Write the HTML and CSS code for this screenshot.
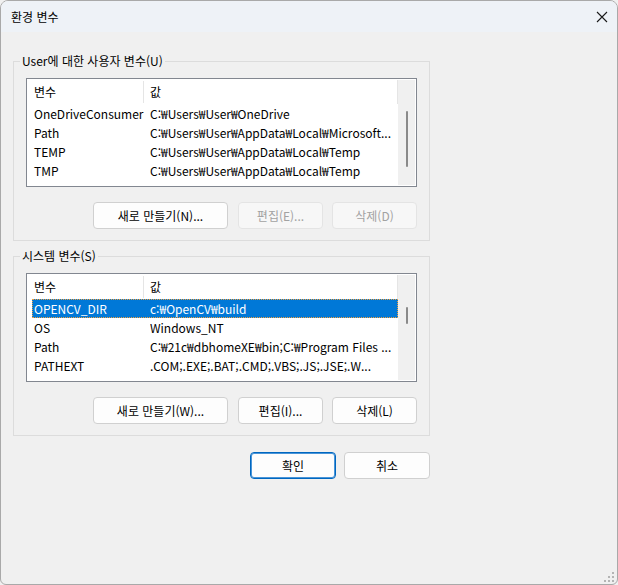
FILE: index.html
```html
<!DOCTYPE html>
<html lang="ko">
<head>
  <meta charset="UTF-8">
  <meta name="viewport" content="width=device-width, initial-scale=1.0">
  <title>환경 변수</title>
  <link rel="stylesheet" href="styles.css">
</head>
<body>
  <div class="window">
    <div class="titlebar">
      <span class="title">환경 변수</span>
      <svg class="close" width="12" height="12" viewBox="0 0 12 12">
        <path d="M1 1L11 11M11 1L1 11" stroke="#1a1a1a" stroke-width="1.1" fill="none"/>
      </svg>
    </div>

    <div class="content">
      <!-- 사용자 변수 -->
      <fieldset class="group">
        <legend>User에 대한 사용자 변수(U)</legend>
        <div class="list">
          <div class="list-body">
            <div class="head"><span class="col-name">변수</span><span class="col-value">값</span></div>
            <div class="row"><span class="name">OneDriveConsumer</span><span class="value">C:₩Users₩User₩OneDrive</span></div>
            <div class="row"><span class="name">Path</span><span class="value">C:₩Users₩User₩AppData₩Local₩Microsoft...</span></div>
            <div class="row"><span class="name">TEMP</span><span class="value">C:₩Users₩User₩AppData₩Local₩Temp</span></div>
            <div class="row"><span class="name">TMP</span><span class="value">C:₩Users₩User₩AppData₩Local₩Temp</span></div>
          </div>
          <div class="scrollbar"><div class="thumb thumb-user"></div></div>
        </div>
        <div class="buttons">
          <button class="btn btn-wide">새로 만들기(N)...</button>
          <button class="btn" disabled>편집(E)...</button>
          <button class="btn" disabled>삭제(D)</button>
        </div>
      </fieldset>

      <!-- 시스템 변수 -->
      <fieldset class="group group-system">
        <legend>시스템 변수(S)</legend>
        <div class="list">
          <div class="list-body">
            <div class="head"><span class="col-name">변수</span><span class="col-value">값</span></div>
            <div class="row selected"><span class="name">OPENCV_DIR</span><span class="value">c:₩OpenCV₩build</span></div>
            <div class="row"><span class="name">OS</span><span class="value">Windows_NT</span></div>
            <div class="row"><span class="name">Path</span><span class="value">C:₩21c₩dbhomeXE₩bin;C:₩Program Files ...</span></div>
            <div class="row"><span class="name">PATHEXT</span><span class="value">.COM;.EXE;.BAT;.CMD;.VBS;.JS;.JSE;.W...</span></div>
          </div>
          <div class="scrollbar"><div class="thumb thumb-system"></div></div>
        </div>
        <div class="buttons">
          <button class="btn btn-wide">새로 만들기(W)...</button>
          <button class="btn">편집(I)...</button>
          <button class="btn">삭제(L)</button>
        </div>
      </fieldset>

      <div class="dialog-buttons">
        <button class="btn btn-default">확인</button>
        <button class="btn">취소</button>
      </div>
    </div>

    <svg class="grip" width="12" height="12" viewBox="0 0 12 12">
      <rect x="9" y="1" width="2" height="2" fill="#b4b4b4"/>
      <rect x="5" y="5" width="2" height="2" fill="#b4b4b4"/>
      <rect x="9" y="5" width="2" height="2" fill="#b4b4b4"/>
      <rect x="1" y="9" width="2" height="2" fill="#b4b4b4"/>
      <rect x="5" y="9" width="2" height="2" fill="#b4b4b4"/>
      <rect x="9" y="9" width="2" height="2" fill="#b4b4b4"/>
    </svg>
  </div>
</body>
</html>
```

FILE: styles.css
```css
* {
  box-sizing: border-box;
}
body {
  margin: 0;
  background-color: #f0f0f0;
  font-family: 'Noto Sans CJK KR', 'Noto Sans', sans-serif;
  font-size: 12px;
  color: #000;
}
.window {
  position: relative;
  width: 618px;
  height: 585px;
  background-color: #f0f0f0;
  border: 1px solid #a9a9a9;
  border-radius: 8px 8px 6px 6px;
  overflow: hidden;
}
.titlebar {
  height: 31px;
  background-color: #eef2f7;
  display: flex;
  align-items: center;
  justify-content: space-between;
  padding: 0 9px 0 10px;
}
.title {
  line-height: 16px;
}
.content {
  width: 430px;
  padding: 21px 0 0 12px;
}
.group {
  margin: 0;
  padding: 0 12px 11px 12px;
  width: 417px;
  border: 1px solid #dcdcdc;
}
.group legend {
  margin-left: -6px;
  padding: 0 2px;
  line-height: 16px;
}
.group-system {
  margin-top: 7px;
}
.list {
  margin-top: 9px;
  height: 109px;
  border: 1px solid #828790;
  background-color: #fff;
  padding: 1px;
  display: flex;
}
.list-body {
  flex: 1;
  overflow: hidden;
}
.head {
  height: 24px;
  display: flex;
  align-items: center;
  border-right: 1px solid #e5e5e5;
}
.head span {
  padding-left: 6px;
  line-height: 22px;
}
.col-name {
  width: 116px;
  border-right: 1px solid #e5e5e5;
}
.row {
  height: 19px;
  margin-left: 4px;
  display: flex;
  align-items: center;
  white-space: nowrap;
}
.row .name {
  width: 118px;
  padding-left: 2px;
}
.row .value {
  flex: 1;
  overflow: hidden;
}
.row.selected {
  background-color: #0078d7;
  color: #fff;
  outline: 1px dotted #f0a040;
  outline-offset: -1px;
}
.scrollbar {
  width: 17px;
  background-color: #f0f0f0;
  display: flex;
  justify-content: center;
}
.thumb {
  width: 2px;
  background-color: #8a8a8a;
  border-radius: 1px;
}
.thumb-user {
  margin-top: 31px;
  height: 56px;
}
.thumb-system {
  margin-top: 32px;
  height: 17px;
}
.buttons {
  margin-top: 15px;
  display: flex;
  justify-content: flex-end;
  gap: 9px;
}
.btn {
  width: 85px;
  height: 27px;
  background-color: #fdfdfd;
  border: 1px solid #d0d0d0;
  border-radius: 4px;
  font-family: inherit;
  font-size: 12px;
  color: #000;
  padding: 0;
}
.btn-wide {
  width: 135px;
  margin-right: 1px;
}
.btn:disabled {
  background-color: #f7f7f7;
  border-color: #e4e4e4;
  color: #a2a2a2;
}
.btn-default {
  border-color: #0067c0;
  box-shadow: inset 0 0 0 1px #4a95d8;
}
.dialog-buttons {
  margin-top: 16px;
  padding-right: 1px;
  display: flex;
  justify-content: flex-end;
  gap: 8px;
}
.dialog-buttons .btn {
  width: 86px;
}
.grip {
  position: absolute;
  right: 2px;
  bottom: 1px;
}
```
